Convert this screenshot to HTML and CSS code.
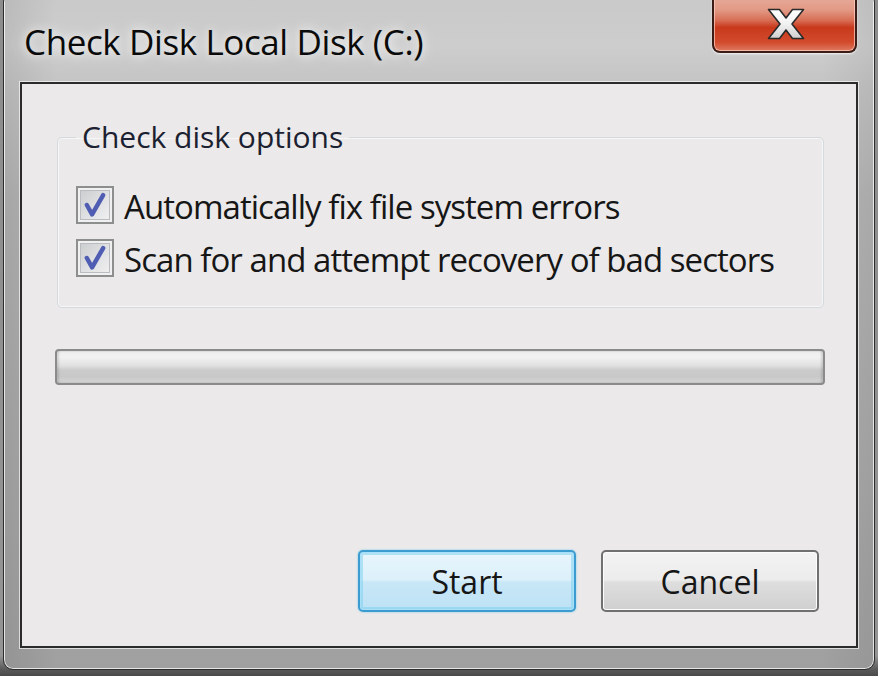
FILE: index.html
```html
<!DOCTYPE html>
<html>
<head>
<meta charset="utf-8">
<link rel="stylesheet" href="styles.css">
</head>
<body>
<div class="window">
  <div class="titlebar">
    <div class="title">Check Disk Local Disk (C:)</div>
    <div class="close">
      <svg class="close-x" width="38" height="32" viewBox="0 0 38 32">
        <defs>
          <linearGradient id="xg" x1="0" y1="0" x2="0" y2="1">
            <stop offset="0" stop-color="#ffffff"/>
            <stop offset="0.5" stop-color="#f1f1f1"/>
            <stop offset="1" stop-color="#cfcfcf"/>
          </linearGradient>
        </defs>
        <polygon points="1.5,1.5 12.5,1.5 19,10 25.5,1.5 36.5,1.5 25,16 36.5,30.5 25.5,30.5 19,22 12.5,30.5 1.5,30.5 13,16" fill="url(#xg)" stroke="#2a2a2a" stroke-width="1.6" stroke-linejoin="round"/>
      </svg>
    </div>
  </div>
  <div class="client">
    <fieldset class="group">
      <legend class="group-label">Check disk options</legend>
      <label class="option">
        <span class="box">
          <svg width="28" height="28" viewBox="0 0 24 24"><path d="M5 12 L9.5 20 L19 3.5" fill="none" stroke="#4f5db2" stroke-width="3.8" stroke-linecap="round" stroke-linejoin="round"/></svg>
        </span>
        <span class="option-text">Automatically fix file system errors</span>
      </label>
      <label class="option">
        <span class="box">
          <svg width="28" height="28" viewBox="0 0 24 24"><path d="M5 12 L9.5 20 L19 3.5" fill="none" stroke="#4f5db2" stroke-width="3.8" stroke-linecap="round" stroke-linejoin="round"/></svg>
        </span>
        <span class="option-text">Scan for and attempt recovery of bad sectors</span>
      </label>
    </fieldset>
    <div class="progress"></div>
    <div class="buttons">
      <button class="btn btn-default">Start</button>
      <button class="btn">Cancel</button>
    </div>
  </div>
</div>
</body>
</html>
```

FILE: styles.css
```css
html, body {
  margin: 0;
  padding: 0;
}
body {
  width: 878px;
  height: 676px;
  overflow: hidden;
  background: linear-gradient(180deg, #8c8c8c 0%, #949494 97%, #5a5a5a 99%, #4a4a4a 100%);
  font-family: "Open Sans", "Noto Sans", sans-serif;
}
.window {
  box-sizing: border-box;
  width: 872px;
  height: 678px;
  margin: -8px 0 0 3px;
  border: 1px solid #2c2c2c;
  border-radius: 10px;
  padding: 0 16px 21px 16px;
  display: flex;
  flex-direction: column;
  background:
    linear-gradient(90deg, rgba(0,0,0,0.08) 0%, rgba(0,0,0,0) 6%, rgba(0,0,0,0) 94%, rgba(0,0,0,0.06) 100%),
    linear-gradient(180deg, #c9c9c9 0%, #cdcdcd 8%, #c3c3c3 14%, #b4b4b4 30%, #a9a9a9 70%, #a0a0a0 100%);
  box-shadow: inset 0 0 0 1px rgba(255,255,255,0.75);
}
.titlebar {
  height: 89px;
  display: flex;
  justify-content: space-between;
  align-items: flex-start;
}
.title {
  margin-top: 29px;
  padding-left: 4px;
  font-size: 35px;
  line-height: 40px;
  color: #0a0a0a;
  letter-spacing: -0.4px;
  text-shadow: 0 0 10px rgba(255,255,255,0.9), 0 0 18px rgba(255,255,255,0.6);
}
.close {
  box-sizing: border-box;
  width: 145px;
  height: 61px;
  margin-top: -1px;
  margin-right: 1px;
  border: 2px solid #3b1d16;
  border-top: none;
  border-radius: 0 0 8px 8px;
  background: linear-gradient(180deg, #e9b0a1 0%, #e29a86 30%, #d86e55 48%, #c9391c 60%, #d24a2c 85%, #de7a60 100%);
  box-shadow: inset 0 0 0 1px rgba(255,210,200,0.7), 0 1px 2px rgba(255,255,255,0.8);
  display: flex;
  align-items: center;
  justify-content: center;
  padding-left: 3px;
}
.close-x {
  margin-top: 4px;
}
.client {
  flex: 1;
  box-sizing: border-box;
  border: 2px solid #2b2b2b;
  background: #ebe9e9;
  box-shadow: 0 0 0 1px rgba(255,255,255,0.65);
  display: flex;
  flex-direction: column;
  padding: 0 31px 34px 33px;
}
.group {
  margin: 35px 1px 0 2px;
  padding: 31px 0 30px 18px;
  border: 1px solid #d3d9dc;
  border-radius: 5px;
  box-shadow: inset 0 0 0 1px rgba(255,255,255,0.6);
  display: flex;
  flex-direction: column;
  gap: 15px;
  min-width: 0;
}
.group-label {
  margin-left: 0;
  padding: 0 6px;
  font-size: 30px;
  line-height: 36px;
  color: #1b2130;
  letter-spacing: 0;
}
.option {
  display: flex;
  align-items: center;
  gap: 10px;
  height: 38px;
}
.box {
  box-sizing: border-box;
  width: 38px;
  height: 38px;
  border: 2px solid #8d8e8e;
  background: linear-gradient(135deg, #c9cacc 0%, #dfe0e2 50%, #f2f2f2 100%);
  box-shadow: inset 0 0 0 2px #f0f0f0, inset 0 0 0 3px #b9bcc0;
  display: flex;
  align-items: center;
  justify-content: center;
}
.option-text {
  font-size: 33px;
  line-height: 38px;
  color: #161616;
  letter-spacing: -0.95px;
  margin-top: 3px;
}
.progress {
  box-sizing: border-box;
  height: 36px;
  margin-top: 41px;
  border: 2px solid #8b8b8b;
  border-radius: 4px;
  background: linear-gradient(180deg, #eeeeee 0%, #f1f1f1 20%, #e1e1e1 45%, #cbcbcb 60%, #c8c8c8 80%, #d5d5d5 100%);
  box-shadow: inset 2px 0 2px rgba(0,0,0,0.12), inset -2px 0 2px rgba(0,0,0,0.12);
}
.buttons {
  margin-top: auto;
  display: flex;
  justify-content: flex-end;
  gap: 25px;
  padding-right: 6px;
}
.btn {
  box-sizing: border-box;
  width: 218px;
  height: 62px;
  border: 2px solid #707070;
  border-radius: 5px;
  background: linear-gradient(180deg, #f3f3f3 0%, #ececec 48%, #dedede 52%, #d0d0d0 100%);
  box-shadow: inset 0 0 0 1px #fcfcfc;
  font-family: "Open Sans", "Noto Sans", sans-serif;
  font-size: 32px;
  color: #161616;
  letter-spacing: 0;
  padding: 0;
}
.btn-default {
  border-color: #3c9ccf;
  background: linear-gradient(180deg, #e8f5fc 0%, #dcf0fa 48%, #c8e7f7 52%, #bde2f5 100%);
  box-shadow: inset 0 0 0 1px #a8e0f8, inset 0 0 0 3px rgba(120,205,240,0.5), 0 0 2px #6cc4ec;
}
```
